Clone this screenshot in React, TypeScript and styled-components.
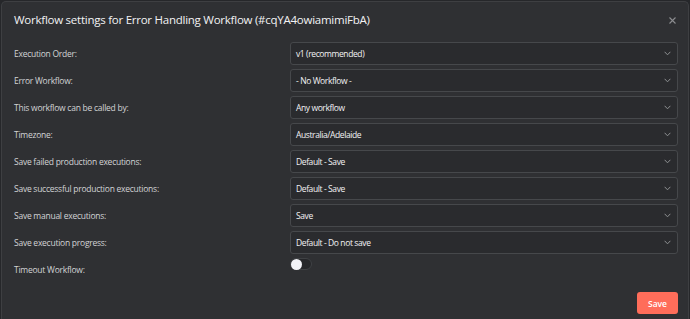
import React from "react";
import styled, { createGlobalStyle } from "styled-components";

const GlobalStyle = createGlobalStyle`
  html, body {
    margin: 0;
    padding: 0;
    background: #26272a;
    overflow: hidden;
  }
  body {
    padding: 1px 1px 0 1px;
    font-family: "Open Sans", "Noto Sans", sans-serif;
  }
  * { box-sizing: border-box; }
`;

const Modal = styled.div`
  height: calc(100vh - 1px);
  background: #2f3033;
  border: 1px solid #3e3f42;
  border-bottom: none;
  border-radius: 5px 5px 0 0;
  display: flex;
  flex-direction: column;
`;

const Header = styled.div`
  display: flex;
  align-items: center;
  justify-content: space-between;
  padding: 10px 12px 14px 12px;
`;

const Title = styled.h1`
  margin: 0;
  font-size: 11.5px;
  line-height: 16px;
  font-weight: 400;
  color: #f2f2f3;
  font-stretch: 90%;
  letter-spacing: -0.25px;
`;

const CloseButton = styled.button`
  border: 0;
  background: none;
  padding: 0;
  width: 10px;
  height: 10px;
  display: flex;
  align-items: center;
  justify-content: center;
  margin-right: -1px;
  color: #8c8d90;
`;

const Form = styled.div`
  display: grid;
  grid-template-columns: 276px 1fr;
  grid-auto-rows: 23px;
  row-gap: 4px;
  padding: 0 10px 0 12px;
`;

const Label = styled.div`
  display: flex;
  align-items: center;
  padding-bottom: 1px;
  font-size: 8.5px;
  color: #d2d3d5;
  font-stretch: 90%;
  letter-spacing: -0.25px;
`;

const Select = styled.div`
  display: flex;
  align-items: center;
  justify-content: space-between;
  height: 23px;
  padding: 0 6px 0 5px;
  background: #2a2b2e;
  border: 1px solid #46484b;
  border-radius: 3px;
  font-size: 8.5px;
  font-weight: 500;
  color: #f2f2f4;
  font-stretch: 90%;
  letter-spacing: -0.4px;
`;

const Chevron = styled.svg`
  width: 7px;
  height: 5px;
  flex: none;
`;

const ToggleCell = styled.div`
  display: flex;
  align-items: flex-start;
`;

const Toggle = styled.div<{ $on?: boolean }>`
  position: relative;
  width: 22px;
  height: 12px;
  border-radius: 6px;
  background: ${(p) => (p.$on ? "#ff6d5a" : "#26272a")};
  border: 1px solid #3f4144;
`;

const Knob = styled.span`
  position: absolute;
  top: -0.5px;
  left: -0.5px;
  width: 11px;
  height: 11px;
  border-radius: 50%;
  background: #f3f3f8;
`;

const Footer = styled.div`
  display: flex;
  justify-content: flex-end;
  padding: 11px 10px 0 12px;
`;

const SaveButton = styled.button`
  width: 41px;
  height: 22px;
  border: 0;
  border-radius: 3px;
  background: #ff6d5a;
  color: #ffffff;
  font-family: "Open Sans", "Noto Sans", sans-serif;
  font-size: 8.5px;
  font-weight: 600;
  font-stretch: 90%;
  padding: 0;
`;

const rows: [string, string][] = [
  ["Execution Order:", "v1 (recommended)"],
  ["Error Workflow:", "- No Workflow -"],
  ["This workflow can be called by:", "Any workflow"],
  ["Timezone:", "Australia/Adelaide"],
  ["Save failed production executions:", "Default - Save"],
  ["Save successful production executions:", "Default - Save"],
  ["Save manual executions:", "Save"],
  ["Save execution progress:", "Default - Do not save"],
];

export default function App() {
  return (
    <>
      <GlobalStyle />
      <Modal>
        <Header>
          <Title>Workflow settings for Error Handling Workflow (#cqYA4owiamimiFbA)</Title>
          <CloseButton aria-label="Close">
            <svg width="7" height="7" viewBox="0 0 7 7">
              <path d="M0.5 0.5L6.5 6.5M6.5 0.5L0.5 6.5" stroke="currentColor" strokeWidth="1.1" />
            </svg>
          </CloseButton>
        </Header>
        <Form>
          {rows.map(([label, value]) => (
            <React.Fragment key={label}>
              <Label>{label}</Label>
              <Select>
                <span>{value}</span>
                <Chevron viewBox="0 0 7 5">
                  <path d="M0.6 0.8L3.5 3.8L6.4 0.8" fill="none" stroke="#8e9093" strokeWidth="1" />
                </Chevron>
              </Select>
            </React.Fragment>
          ))}
          <Label>Timeout Workflow:</Label>
          <ToggleCell>
            <Toggle>
              <Knob />
            </Toggle>
          </ToggleCell>
        </Form>
        <Footer>
          <SaveButton>Save</SaveButton>
        </Footer>
      </Modal>
    </>
  );
}
